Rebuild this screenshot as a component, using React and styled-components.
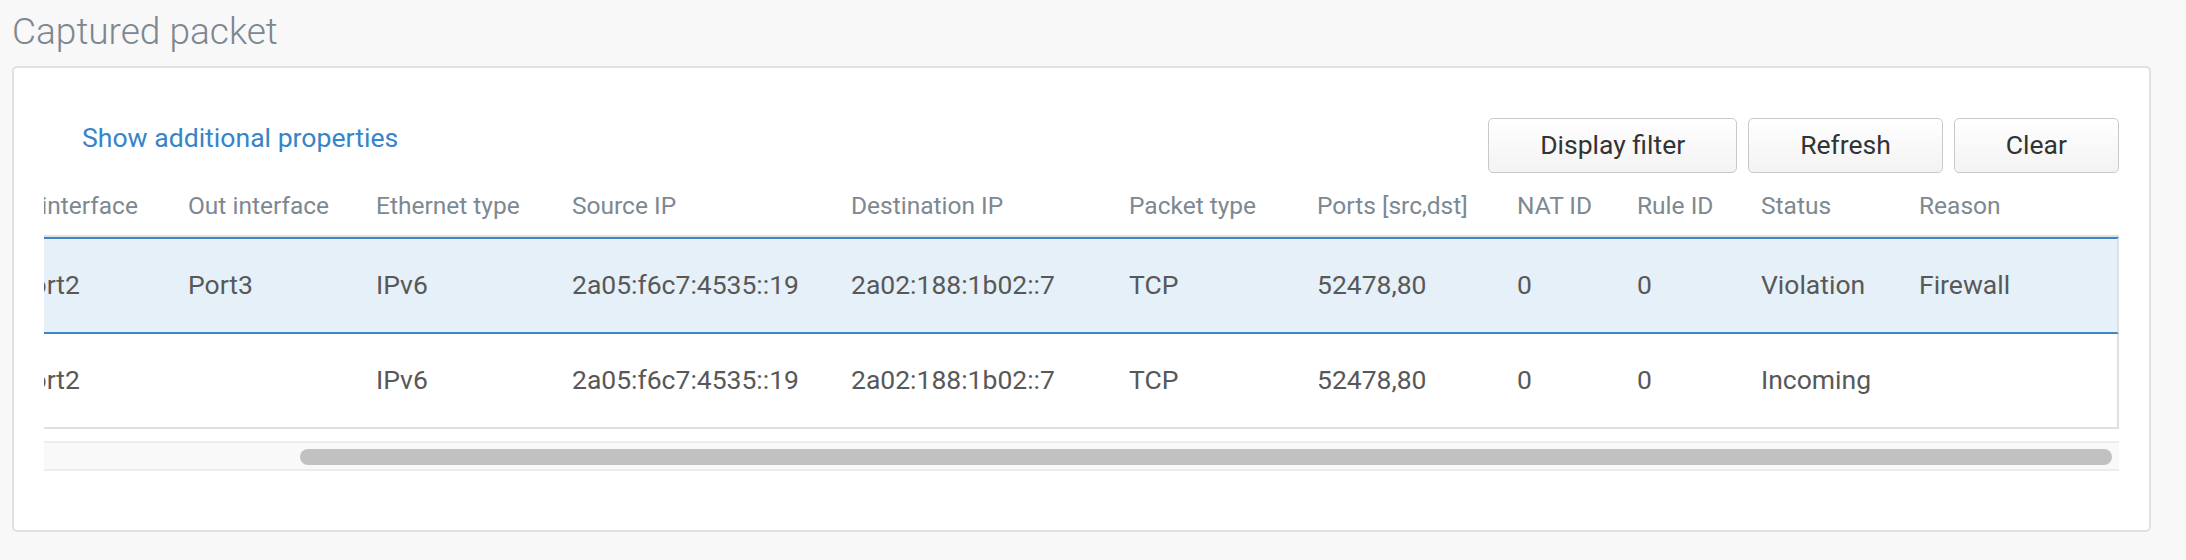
import React from "react";
import styled, { createGlobalStyle } from "styled-components";

const GlobalStyle = createGlobalStyle`
  html, body { margin: 0; padding: 0; background: #f8f8f8; }
  body { font-family: Roboto, "Liberation Sans", Arial, sans-serif; }
  *, *::before, *::after { box-sizing: border-box; }
`;

const Page = styled.div`
  padding: 13px 35px 0 12px;
`;

const Title = styled.h1`
  margin: 0 0 16px;
  font-size: 37px;
  line-height: 37px;
  font-weight: 300;
  color: #7c8790;
`;

const Card = styled.section`
  background: #fff;
  border: 2px solid #e1e1e1;
  border-radius: 5px;
  padding: 50px 30px 59px;
`;

const Toolbar = styled.div`
  display: flex;
  align-items: flex-start;
  justify-content: space-between;
`;

const PropsLink = styled.a`
  margin: 4px 0 0 38px;
  font-size: 26.6px;
  line-height: 32px;
  color: #3684c9;
  text-decoration: none;
  cursor: pointer;
`;

const ButtonGroup = styled.div`
  display: flex;
  gap: 11px;
`;

const Button = styled.button`
  height: 55px;
  padding: 0 51px;
  border: 1px solid #c9c9c9;
  border-radius: 5px;
  background: linear-gradient(#ffffff, #f3f3f3);
  font-family: Roboto, "Liberation Sans", Arial, sans-serif;
  font-size: 26.5px;
  line-height: 1;
  color: #333;
  cursor: pointer;
`;

const Viewport = styled.div`
  overflow: hidden;
`;

const Table = styled.div`
  display: flex;
  flex-direction: column;
  width: max-content;
  margin-left: ${(p) => p.$offset}px;
`;

const HeaderRow = styled.div`
  display: flex;
  padding: 18px 0 13.5px;
  border-bottom: 2px solid #dde1e5;
`;

const HeadCell = styled.div`
  flex: none;
  width: ${(p) => p.$w}px;
  padding-left: 23px;
  font-size: 24.5px;
  line-height: 30px;
  color: #7d8891;
  white-space: nowrap;
`;

const Row = styled.div`
  display: flex;
  align-items: center;
  height: ${(p) => (p.$selected ? 97 : 95)}px;
  background: ${(p) => (p.$selected ? "#e5f0f8" : "#fff")};
  border-top: ${(p) => (p.$selected ? "2px solid #3d85c6" : "none")};
  border-bottom: 2px solid ${(p) => (p.$selected ? "#3d85c6" : "#dde1e5")};
  border-right: 2px solid #dde1e5;
`;

const Cell = styled.div`
  flex: none;
  width: ${(p) => p.$w}px;
  padding-left: 23px;
  font-size: 26.5px;
  line-height: 32px;
  color: #585858;
  white-space: nowrap;
`;

const ScrollTrack = styled.div`
  margin-top: 12px;
  height: 30px;
  border-top: 2px solid #ececec;
  border-bottom: 2px solid #ececec;
  background: #f9f9f9;
  padding: 6px 7px 0 ${(p) => p.$start}px;
`;

const ScrollThumb = styled.div`
  height: 16px;
  border-radius: 8px;
  background: #c1c1c1;
`;

const columns = [
  { key: "inIf", label: "In interface", w: 173 },
  { key: "outIf", label: "Out interface", w: 188 },
  { key: "eth", label: "Ethernet type", w: 196 },
  { key: "src", label: "Source IP", w: 279 },
  { key: "dst", label: "Destination IP", w: 278 },
  { key: "pkt", label: "Packet type", w: 188 },
  { key: "ports", label: "Ports [src,dst]", w: 200 },
  { key: "nat", label: "NAT ID", w: 120 },
  { key: "rule", label: "Rule ID", w: 124 },
  { key: "status", label: "Status", w: 158 },
  { key: "reason", label: "Reason", w: 221 },
];

const rows = [
  {
    id: 1,
    selected: true,
    inIf: "Port2",
    outIf: "Port3",
    eth: "IPv6",
    src: "2a05:f6c7:4535::19",
    dst: "2a02:188:1b02::7",
    pkt: "TCP",
    ports: "52478,80",
    nat: "0",
    rule: "0",
    status: "Violation",
    reason: "Firewall",
  },
  {
    id: 2,
    selected: false,
    inIf: "Port2",
    outIf: "",
    eth: "IPv6",
    src: "2a05:f6c7:4535::19",
    dst: "2a02:188:1b02::7",
    pkt: "TCP",
    ports: "52478,80",
    nat: "0",
    rule: "0",
    status: "Incoming",
    reason: "",
  },
];

export default function App() {
  return (
    <>
      <GlobalStyle />
      <Page>
        <Title>Captured packet</Title>
        <Card>
          <Toolbar>
            <PropsLink>Show additional properties</PropsLink>
            <ButtonGroup>
              <Button>Display filter</Button>
              <Button>Refresh</Button>
              <Button>Clear</Button>
            </ButtonGroup>
          </Toolbar>
          <Viewport>
            <Table $offset={-52}>
              <HeaderRow>
                {columns.map((c) => (
                  <HeadCell key={c.key} $w={c.w}>
                    {c.label}
                  </HeadCell>
                ))}
              </HeaderRow>
              {rows.map((r) => (
                <Row key={r.id} $selected={r.selected}>
                  {columns.map((c) => (
                    <Cell key={c.key} $w={c.w}>
                      {r[c.key]}
                    </Cell>
                  ))}
                </Row>
              ))}
            </Table>
          </Viewport>
          <ScrollTrack $start={256}>
            <ScrollThumb />
          </ScrollTrack>
        </Card>
      </Page>
    </>
  );
}
